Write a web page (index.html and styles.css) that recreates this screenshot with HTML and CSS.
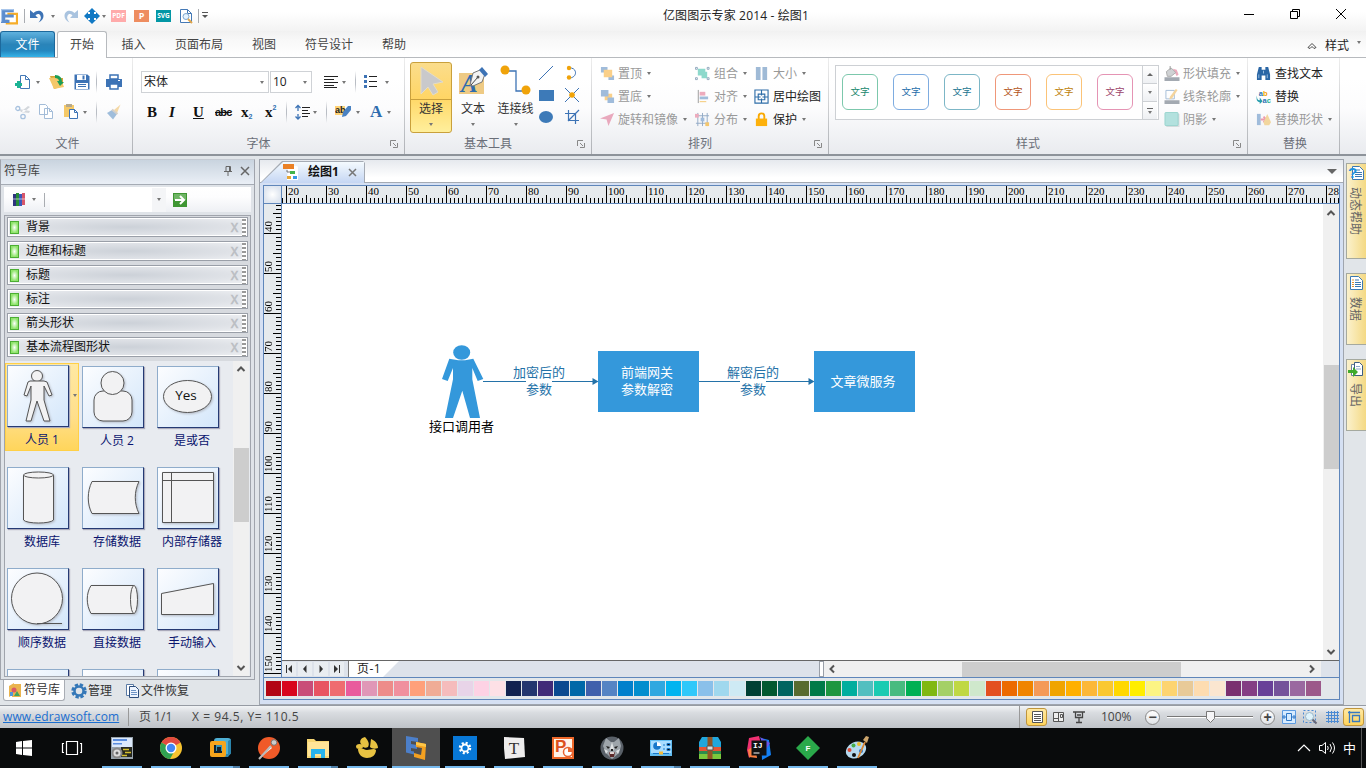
FILE: index.html
```html
<!DOCTYPE html>
<html lang="zh-CN">
<head>
<meta charset="utf-8">
<title>亿图图示专家 2014 - 绘图1</title>
<link rel="stylesheet" href="styles.css">
</head>
<body>
<div class="app">
<header class="titlebar">
  <div class="quick">
    <svg class="ic logo" viewBox="0 0 16 16"><path d="M6 5.500h9v9H5.500V11" fill="#fff" stroke="#f6ad28" stroke-width="2"/><path d="M0 1h12v3H4v2h8v3H4v2h4v3H0z" fill="#5c8dce"/><path d="M0 1h12v1H1v11H0z" fill="#a9c6eb"/></svg>
    <span class="vsep"></span>
    <svg class="ic" viewBox="0 0 16 16"><path d="M4.500 5C9 1 14.500 3 14.500 8c0 3-2 5-5 6.500 2-2.500 3-4.500 2-6.500-1-2.500-3-2.500-5-.5L9 10H1V2z" fill="#3d73b5"/></svg>
    <i class="dd"></i>
    <svg class="ic" viewBox="0 0 16 16"><path d="M11.500 5C7 1 1.500 3 1.500 8c0 3 2 5 5 6.500C4.500 12 3.500 10 4.500 8c1-2.500 3-2.500 5-.5L7 10h8V2z" fill="#a9c3df"/></svg>
    <svg class="ic" viewBox="0 0 16 16"><path d="M8 0l4 4h-2v2h2V4l4 4-4 4v-2h-2v2h2l-4 4-4-4h2v-2H4v2L0 8l4-4v2h2V4H4z" fill="#1179c4"/><path d="M6 4h4v2h2v4h-2v2H6v-2H4V6h2z" fill="#1179c4"/></svg>
    <i class="dd"></i>
    <span class="badge pdf">PDF</span><span class="badge ppt">P</span><span class="badge svgb">SVG</span>
    <svg class="ic" viewBox="0 0 16 16"><path d="M2.500 1.500h7l4 4v9h-11z" fill="#fff" stroke="#4479b6"/><path d="M9.500 1.500v4h4" fill="none" stroke="#4479b6"/><circle cx="8" cy="8.500" r="3" fill="#e5f3ff" stroke="#7ca6cf"/><path d="M10 11l4 4" stroke="#e2a64a" stroke-width="2"/></svg>
    <span class="vsep"></span>
    <svg class="tiny" viewBox="0 0 6 8"><path d="M0 .5h6" stroke="#555"/><path d="M0 3h6L3 6z" fill="#555"/></svg>
  </div>
  <div class="caption">亿图图示专家 2014 - 绘图1</div>
  <div class="winctl">
    <svg viewBox="0 0 12 12"><path d="M1 6.500h10" stroke="#000"/></svg>
    <svg viewBox="0 0 12 12"><path d="M1.500 3.500h7v7h-7zM3.500 3V1.500h7v7H9" fill="none" stroke="#000"/></svg>
    <svg viewBox="0 0 12 12"><path d="M1 1l10 10M11 1L1 11" stroke="#000"/></svg>
  </div>
</header>
<nav class="tabs">
  <a class="tab file">文件</a><a class="tab on">开始</a><a class="tab w50">插入</a><a class="tab w80">页面布局</a><a class="tab w50">视图</a><a class="tab w80">符号设计</a><a class="tab w50">帮助</a>
  <div class="tabs-end"><svg viewBox="0 0 10 8"><path d="M1 5.500l4-4 4 4-2 1-2-2-2 2z" fill="#fff" stroke="#444"/></svg><span>样式</span><i class="dd"></i></div>
</nav>
<section class="ribbon">
  <div class="group g-file">
    <div class="body two">
      <div class="row r-new">
        <svg class="ic" viewBox="0 0 16 16"><path d="M5.500 1.500h5l4 4v9h-9z" fill="#fff" stroke="#4479b6"/><path d="M10.500 1.500v4h4" fill="none" stroke="#4479b6"/><path d="M3.500 7v7M0 10.500h7" stroke="#1cb394" stroke-width="3"/></svg>
        <i class="dd"></i>
        <svg class="ic" viewBox="0 0 16 16"><path d="M1 2h5l2 2 6 0v8l-9 3z" fill="#d6a437"/><path d="M0 4l11-1 4 10-10 2z" fill="#f4c869"/><path d="M6 1c5 0 7 3 7 7h2l-4 4-3-5h2c0-2-2-3-4-3z" fill="#1b9e56"/></svg>
        <svg class="ic" viewBox="0 0 16 16"><path d="M.5.5h13l2 2v13H.5z" fill="#3d73b5"/><path d="M3 1h9v5H3zM2 9h12v6H2z" fill="#fff"/><path d="M8.500 1.500v4h2v-4z" fill="#3d73b5"/><path d="M4 10.500h8M4 12.500h8" stroke="#3d73b5"/></svg>
        <span class="vsep tall"></span>
        <svg class="ic" viewBox="0 0 16 16"><path d="M0 5h16v8H0z" fill="#3d73b5"/><path d="M4 1h8v4H4zM4 10h8v5H4z" fill="#fff" stroke="#3d73b5" stroke-width="1.500"/><path d="M12 6.500h2" stroke="#fff"/></svg>
      </div>
      <div class="row r-cut">
        <svg class="ic" viewBox="0 0 16 16"><path d="M4 5l11 2-1 2-8-1zM8 9l7-6-2-1-6 5" fill="#d3d7dc"/><circle cx="2.800" cy="4.500" r="2" fill="none" stroke="#a8c2df" stroke-width="1.300"/><circle cx="8" cy="12.500" r="2.200" fill="none" stroke="#a8c2df" stroke-width="1.300"/></svg>
        <svg class="ic" viewBox="0 0 16 16"><path d="M1.500.5h6l2 2v8h-8zM6.500 4.500h5l3 3v7h-8z" fill="#fff" stroke="#a3bcd8"/><path d="M11.500 4.500v3h3" fill="none" stroke="#a3bcd8"/></svg>
        <svg class="ic" viewBox="0 0 16 16"><path d="M1 1h10v12H1z" fill="#f5c968"/><path d="M3 0h6v3H3z" fill="#b6a98c"/><path d="M6.500 5.500h5l3 3v6h-8z" fill="#fff" stroke="#3d73b5"/><path d="M11.500 5.500v3h3" fill="none" stroke="#3d73b5"/></svg>
        <i class="dd"></i>
        <span class="vsep tall"></span>
        <svg class="ic" viewBox="0 0 16 16"><path d="M14.500.5L8 6l3 3z" fill="#f4d8a6"/><path d="M1 9l5-3 5 4-4 5.500z" fill="#9fbddb"/><path d="M6 5.500l5.500 4.500" stroke="#d4cfc8" stroke-width="2"/></svg>
      </div>
    </div>
    <div class="foot plain">文件</div>
  </div>
  <div class="group g-font">
    <div class="body two">
      <div class="row r-face">
        <div class="combo"><span>宋体</span><i class="dd"></i></div>
        <div class="combo"><span>10</span><i class="dd"></i></div>
        <svg class="ic" viewBox="0 0 16 16"><path d="M0 2.500h14M0 5.500h10M0 8.500h14M0 11.500h10M0 13.500h13" stroke="#222"/></svg>
        <i class="dd"></i><span class="vsep tall"></span>
        <svg class="ic" viewBox="0 0 16 16"><path d="M0 1h3v3H0zM0 6h3v3H0zM0 11h3v3H0z" fill="#3d73b5"/><path d="M5 2.500h8M5 7.500h8M5 12.500h8" stroke="#222"/></svg>
        <i class="dd"></i>
      </div>
      <div class="row r-bold">
        <b>B</b><b class="it">I</b><b class="un">U</b><span class="strike">abc</span><b class="x">x<small class="sub">2</small></b><b class="x">x<small class="sup">2</small></b>
        <span class="vsep tall"></span>
        <svg class="ic" viewBox="0 0 16 16"><path d="M3 2v5M3 10v5M.5 4L3 1.500 5.500 4M.5 12.500L3 15l2.500-2.500" stroke="#3d73b5" fill="none" stroke-width="1.300"/><path d="M7 3.500h8M7 6.500h6M7 9.500h8M7 12.500h6" stroke="#222"/></svg>
        <i class="dd"></i><span class="vsep tall"></span>
        <svg class="ic" viewBox="0 0 16 16"><path d="M0 2h10v9H0z" fill="#ffd273"/><text x="0" y="9" class="abtxt">ab</text><path d="M8 8l5-6h3v4l-5 6-4 1z" fill="#4a82c2"/></svg>
        <i class="dd"></i><b class="acol">A</b><i class="dd"></i>
      </div>
    </div>
    <div class="foot">字体<svg class="launch" viewBox="0 0 8 8"><path d="M.5 6V.5H6M3 3l3 3M7.500 3v4.500H3" fill="none" stroke="#888"/></svg></div>
  </div>
  <div class="group g-tool">
    <div class="body tools">
      <div class="big sel"><svg viewBox="0 0 40 36"><path d="M10 4v27l7-7 5 8 5-3-5-8 10-2z" fill="#c9c9cb" stroke="#e3dcc8"/></svg><span>选择</span><i class="dd"></i></div>
      <div class="big"><svg viewBox="0 0 40 36"><path d="M6 11h25v21H6z" fill="#eeca84"/><text x="8" y="30" class="bigA">A</text><path d="M17 23l3-12 7-3 5 4-3 8-9 4z" fill="#f3f3f3" stroke="#777"/><path d="M26 8l3-3 6 7-3 3z" fill="#3d73b5"/><path d="M18 23l7-8" stroke="#444"/><circle cx="25" cy="15" r="1.500" fill="#555"/></svg><span>文本</span><i class="dd"></i></div>
      <div class="big"><svg viewBox="0 0 40 36"><path d="M9 9h11v20h11" fill="none" stroke="#3d73b5" stroke-width="1.300"/><circle cx="9" cy="8" r="4.500" fill="#f0a30a"/><circle cx="30" cy="28" r="4.500" fill="#f0a30a"/></svg><span>连接线</span><i class="dd"></i></div>
      <div class="mini">
        <svg class="ic" viewBox="0 0 16 16"><path d="M1 15L15 1" stroke="#3d73b5"/></svg>
        <svg class="ic" viewBox="0 0 16 16"><path d="M5 3c8-1 9 9 1 10" fill="none" stroke="#3d73b5"/><circle cx="5" cy="3" r="2.200" fill="#f0a30a"/><circle cx="5" cy="12.500" r="2.200" fill="#f0a30a"/></svg>
        <svg class="ic" viewBox="0 0 16 16"><path d="M1 3h15v11H1z" fill="#3d7ab8"/></svg>
        <svg class="ic" viewBox="0 0 16 16"><path d="M1 1l14 14M15 1L1 15" stroke="#3d73b5"/><circle cx="8" cy="8" r="2.800" fill="#f0a30a"/></svg>
        <svg class="ic" viewBox="0 0 16 16"><ellipse cx="8" cy="8" rx="7" ry="6" fill="#3d7ab8"/></svg>
        <svg class="ic" viewBox="0 0 16 16"><path d="M4.500 1v10.500H15M1 4.500h10.500V15M4 12L15 1" fill="none" stroke="#3d73b5" stroke-width="1.200"/></svg>
      </div>
    </div>
    <div class="foot">基本工具<svg class="launch" viewBox="0 0 8 8"><path d="M.5 6V.5H6M3 3l3 3M7.500 3v4.500H3" fill="none" stroke="#888"/></svg></div>
  </div>
  <div class="group g-arr">
    <div class="body cols">
      <div class="col dim">
        <div class="cmd"><svg class="ic" viewBox="0 0 16 16"><path d="M1 1h7v6H1zM9 10h6v5H9z" fill="#a0bcdb"/><path d="M4 4h9v8H4z" fill="#fad08a"/></svg>置顶<i class="dd"></i></div>
        <div class="cmd"><svg class="ic" viewBox="0 0 16 16"><path d="M5 5h8v7H5z" fill="#fad08a"/><path d="M1 1h8v7H1zM8 9h7v6H8z" fill="#a0bcdb"/></svg>置底<i class="dd"></i></div>
        <div class="cmd"><svg class="ic" viewBox="0 0 16 16"><path d="M0 7l15-6-6 14-2-7z" fill="#e9a9bd"/></svg>旋转和镜像<i class="dd"></i></div>
      </div>
      <div class="col dim">
        <div class="cmd"><svg class="ic" viewBox="0 0 16 16"><path d="M3 3h8v7H3zM7 6h6v7H7z" fill="#8dd9cc"/><path d="M.5 1.500h2v2h-2zM13 1.500h2v2h-2zM.5 12.500h2v2h-2zM13 12.500h2v2h-2z" fill="#fff" stroke="#8fa6bd"/></svg>组合<i class="dd"></i></div>
        <div class="cmd"><svg class="ic" viewBox="0 0 16 16"><path d="M3.500 1v14" stroke="#999"/><path d="M5 3h6v4H5z" fill="#edabbd"/><path d="M5 8h9v3H5z" fill="#a0bcdb"/><path d="M5 13.500h7" stroke="#f3c66e"/></svg>对齐<i class="dd"></i></div>
        <div class="cmd"><svg class="ic" viewBox="0 0 16 16"><path d="M3 1v14M8 1v14M13 1v14M1 4h14M1 12h14" stroke="#91aac5"/><path d="M0 2h4v4H0z" fill="#edabbd"/><path d="M6 6h4v4H6z" fill="#a0bcdb"/><path d="M11 11h4v4h-4z" fill="#f3c66e"/></svg>分布<i class="dd"></i></div>
      </div>
      <div class="col">
        <div class="cmd dim"><svg class="ic" viewBox="0 0 16 16"><path d="M2 1h5v14H2zM9 1h5v14H9z" fill="#9fbad6"/></svg>大小<i class="dd"></i></div>
        <div class="cmd"><svg class="ic" viewBox="0 0 16 16"><path d="M1 1h14v14H1zM4.500 5.500h7v6h-7zM8 1v6M8 10v5M1 8.500h6M9 8.500h6" fill="none" stroke="#2e6da8" stroke-width="1.200"/></svg>居中绘图</div>
        <div class="cmd"><svg class="ic" viewBox="0 0 16 16"><path d="M5 8V4.500a3 3 0 016 0V8" fill="none" stroke="#f9a800" stroke-width="2"/><path d="M2 7h12v8H2z" fill="#fdb10c"/></svg>保护<i class="dd"></i></div>
      </div>
    </div>
    <div class="foot">排列<svg class="launch" viewBox="0 0 8 8"><path d="M.5 6V.5H6M3 3l3 3M7.500 3v4.500H3" fill="none" stroke="#888"/></svg></div>
  </div>
  <div class="group g-style">
    <div class="body styl">
      <div class="gallery">
        <span class="sw s1">文字</span><span class="sw s2">文字</span><span class="sw s3">文字</span><span class="sw s4">文字</span><span class="sw s5">文字</span><span class="sw s6">文字</span>
        <div class="spin"><span><i class="du"></i></span><span><i class="dd"></i></span><span class="more"><i class="dd"></i></span></div>
      </div>
      <div class="col dim">
        <div class="cmd"><svg class="ic" viewBox="0 0 16 16"><path d="M9 3l4 1 2 5-2 2z" fill="#edabbd"/><path d="M2 6l5-4 5 5-5 4H3z" fill="#d0d2d4" stroke="#aaa"/><path d="M6 4V0" stroke="#999"/><path d="M0 12h16v4H0z" fill="#a3a9b1"/></svg>形状填充<i class="dd"></i></div>
        <div class="cmd"><svg class="ic" viewBox="0 0 16 16"><path d="M1.500 1.500h9v9h-9z" fill="none" stroke="#a3bcd8"/><path d="M12 0l2 1-6 9-3 1 1-3z" fill="#f4d49c"/><path d="M0 12h16v4H0z" fill="#a3a9b1"/></svg>线条轮廓<i class="dd"></i></div>
        <div class="cmd"><svg class="ic" viewBox="0 0 16 16"><path d="M2 2h14v14H2z" fill="#dadcdf"/><rect x=".5" y=".5" width="14" height="14" rx="1" fill="#b3e1de" stroke="#96d3cd"/></svg>阴影<i class="dd"></i></div>
      </div>
    </div>
    <div class="foot">样式<svg class="launch" viewBox="0 0 8 8"><path d="M.5 6V.5H6M3 3l3 3M7.500 3v4.500H3" fill="none" stroke="#888"/></svg></div>
  </div>
  <div class="group g-rep">
    <div class="body cols">
      <div class="col">
        <div class="cmd"><svg class="ic" viewBox="0 0 16 16"><path d="M3 1h3v3h4V1h3l2 8v6h-5v-5H6v5H1V9z" fill="#2a66a5"/><path d="M3 9v4M12 9v4M8 5v3" stroke="#9bbfe2"/></svg>查找文本</div>
        <div class="cmd"><svg class="ic" viewBox="0 0 16 16"><text x="3" y="7" class="abtxt2">a<tspan fill="#f2a200">b</tspan></text><text x="7" y="15" class="abtxt2">a<tspan fill="#1cab93">c</tspan></text><path d="M1 7c0 4 1 5 3 5V9l3 4-3 3v-2c-3 0-4-3-3-7" fill="#239cad"/></svg>替换</div>
        <div class="cmd dim"><svg class="ic" viewBox="0 0 16 16"><path d="M1 2h4v12H1z" fill="#a0bcdb"/><path d="M5 8h5M8 5l3 3-3 3" stroke="#ed9aac" fill="none" stroke-width="2"/><path d="M12 2l4 9-2 3h-5l-1-3z" fill="#f2d69e"/></svg>替换形状<i class="dd"></i></div>
      </div>
    </div>
    <div class="foot plain">替换</div>
  </div>
</section>
<main class="work">
  <aside class="side">
    <div class="panel">
      <div class="phead"><span>符号库</span><svg viewBox="0 0 10 12"><path d="M3 1.500h4.500v5H3zM1 6.500h8M5 7v4M6.500 2v4" fill="none" stroke="#666"/></svg><svg viewBox="0 0 10 12"><path d="M1 2l8 8M9 2l-8 8" stroke="#666" stroke-width="1.500"/></svg></div>
      <div class="ptool">
        <svg class="ic" viewBox="0 0 16 16"><path d="M2 2h3v12H2z" fill="#2e337e"/><path d="M5 1h3v13H5z" fill="#278a38"/><path d="M8 2h3v12H8z" fill="#3a58ba"/><path d="M11 1h3v12h-3z" fill="#d7566b"/><path d="M2 7h12" stroke="#fff" stroke-opacity=".3" stroke-width="2"/></svg>
        <i class="dd"></i><span class="vsep"></span>
        <div class="search"><span><i class="dd"></i></span></div>
        <svg class="go" viewBox="0 0 14 14"><path d="M0 0h14v14H0z" fill="#3f9633"/><path d="M1 1h12v6H1z" fill="#6fb565"/><path d="M2 7h8M7 3l4 4-4 4" fill="none" stroke="#fff" stroke-width="2"/></svg>
      </div>
      <div class="plist">
        <div class="libs">
          <div class="lib"><i class="book"></i><span>背景</span><em>X</em><u></u></div>
          <div class="lib"><i class="book"></i><span>边框和标题</span><em>X</em><u></u></div>
          <div class="lib"><i class="book"></i><span>标题</span><em>X</em><u></u></div>
          <div class="lib"><i class="book"></i><span>标注</span><em>X</em><u></u></div>
          <div class="lib"><i class="book"></i><span>箭头形状</span><em>X</em><u></u></div>
          <div class="lib"><i class="book"></i><span>基本流程图形状</span><em>X</em><u></u></div>
        </div>
        <div class="shapewrap">
          <div class="shapes">
            <div class="shape picked"><svg viewBox="0 0 60 60"><g class="ln"><circle cx="29" cy="10" r="5.500"/><path d="M22 15h14l3 1 5 13-3 1-5-10v14l6 21h-6l-7-20-6 20h-5l5-21V20l-4 10-3-1 4-13z"/></g></svg><span>人员 1</span><i class="dd"></i></div>
            <div class="shape"><svg viewBox="0 0 60 60"><g class="ln"><rect x="11" y="24" width="38" height="30" rx="9"/><circle cx="29.500" cy="16" r="11.500"/></g></svg><span>人员 2</span></div>
            <div class="shape"><svg viewBox="0 0 60 60"><g class="ln"><ellipse cx="29.500" cy="29.500" rx="24" ry="16"/></g><text x="28" y="33" class="yes">Yes</text></svg><span>是或否</span></div>
            <div class="shape"><svg viewBox="0 0 60 60"><g class="ln"><path d="M15.500 7v45c3 4 27 4 30 0V7"/><ellipse cx="30.500" cy="7" rx="15" ry="3"/></g></svg><span>数据库</span></div>
            <div class="shape"><svg viewBox="0 0 60 60"><g class="ln"><path d="M9 13.500h47c-5 10-5 22 0 32H9c-5-9-5-22 0-32z"/></g></svg><span>存储数据</span></div>
            <div class="shape"><svg viewBox="0 0 60 60"><g class="ln"><path d="M4.500 4.500h51v50h-51zM13.500 4.500v50M4.500 12.500h51"/></g></svg><span>内部存储器</span></div>
            <div class="shape"><svg viewBox="0 0 60 60"><g class="ln"><circle cx="29" cy="29.500" r="25.500"/><path d="M29 54.500h25"/></g></svg><span>顺序数据</span></div>
            <div class="shape"><svg viewBox="0 0 60 60"><g class="ln"><path d="M8 16.500h43c4 7 4 20 0 28H8c-5-9-5-20 0-28z"/><ellipse cx="51" cy="30.500" rx="3.500" ry="14"/></g></svg><span>直接数据</span></div>
            <div class="shape"><svg viewBox="0 0 60 60"><g class="ln"><path d="M3.500 24.500l52-10v31h-52z"/></g></svg><span>手动输入</span></div>
            <div class="shape"><svg viewBox="0 0 60 60"></svg></div><div class="shape"><svg viewBox="0 0 60 60"></svg></div><div class="shape"><svg viewBox="0 0 60 60"></svg></div>
          </div>
          <div class="vbar vb-side"><svg viewBox="0 0 10 8"><path d="M1.500 6L5 2.500 8.500 6" class="chev"/></svg><b></b><svg viewBox="0 0 10 8"><path d="M1.500 2L5 5.500 8.500 2" class="chev"/></svg></div>
        </div>
      </div>
    </div>
    <div class="stabs">
      <div class="stab on"><svg class="ic" viewBox="0 0 16 16"><path d="M2 4l5-3v11l-5 3zM7 2h7v13H5z" fill="#eab44e"/><circle cx="7" cy="8" r="2.500" fill="#d95968"/><path d="M7 14l3-5 3 5z" fill="#43a35e"/><path d="M3 10h3v4H3z" fill="#5196d8"/></svg>符号库</div>
      <div class="stab"><svg class="ic" viewBox="0 0 16 16"><circle cx="8" cy="8" r="6.200" fill="none" stroke="#3578b8" stroke-width="3" stroke-dasharray="3.200 1.670"/><circle cx="8" cy="8" r="4.500" fill="none" stroke="#3578b8" stroke-width="2.500"/></svg>管理</div>
      <div class="stab"><svg class="ic" viewBox="0 0 16 16"><path d="M2.500 1.500h7v11h-7z" fill="#fff" stroke="#5a7aa5"/><path d="M5.500 3.500h6l3 3v8h-9z" fill="#edf4ff" stroke="#2c4d7c"/><path d="M7 7.500h5M7 9.500h6M7 11.500h6" stroke="#6d93c5"/></svg>文件恢复</div>
    </div>
  </aside>
  <section class="editor">
    <div class="dtabs">
      <div class="dtab"><svg class="ic" viewBox="0 0 16 16"><path d="M5 2h9l1 1v13H4z" fill="#fff"/><path d="M0 0h11v5H0z" fill="#ea8126"/><path d="M7 7h5v3H7z" fill="#43b34a"/><path d="M4 12h4v3H4z" fill="#e8a634"/><path d="M10 12h4v3h-4z" fill="#3999e5"/><path d="M4 6v2h3" fill="none" stroke="#777"/></svg><span>绘图1</span><svg class="dx" viewBox="0 0 9 9"><path d="M1 1l7 7M8 1L1 8" stroke="#777" stroke-width="1.500"/></svg></div>
      <i class="dlist"></i>
    </div>
    <div class="doc">
      <div class="hr"><span class="corner"></span><div class="hruler" id="hruler"></div></div>
      <div class="mid">
        <div class="vruler" id="vruler"></div>
        <div class="sheet">
          <div class="view-row">
            <div class="canvas">
              <svg class="wires" viewBox="282 204 1041 456">
                <g fill="#3498db"><ellipse cx="461.700" cy="352.500" rx="8.500" ry="7.300"/><path d="M449.300 358.700l9 1.600h6.700l8.300-1.600 10 20.300-5.600 2-5.400-13v11.300l7.700 38.700h-10l-7.700-27.300-9.300 27.300h-8l8-38.700V368l-5.300 13-5.700-2z"/></g>
                <path d="M483 381.500h43M552 381.500h43M699 381.500h41M766 381.500h45" stroke="#2472a8"/>
                <path d="M592.500 378l6 3.500-6 3.500zM808.500 378l6 3.500-6 3.500z" fill="#2472a8"/>
              </svg>
              <span class="node n1">前端网关<br>参数解密</span>
              <span class="node n2">文章微服务</span>
              <span class="lbl l1">加密后的<br>参数</span>
              <span class="lbl l2">解密后的<br>参数</span>
              <span class="lbl l3">接口调用者</span>
            </div>
            <div class="vbar vb-doc"><svg viewBox="0 0 10 8"><path d="M1.500 6L5 2.500 8.500 6" class="chev"/></svg><b></b><svg viewBox="0 0 10 8"><path d="M1.500 2L5 5.500 8.500 2" class="chev"/></svg></div>
          </div>
          <div class="pages">
            <div class="pnav"><svg viewBox="0 0 8 8"><path d="M7 0v8L3 4z" fill="#333"/><path d="M1.500 0v8" stroke="#333"/></svg><svg viewBox="0 0 8 8"><path d="M5.500 0v8L2 4z" fill="#333"/></svg><svg viewBox="0 0 8 8"><path d="M2.500 0v8L6 4z" fill="#333"/></svg><svg viewBox="0 0 8 8"><path d="M1 0v8l4-4z" fill="#333"/><path d="M6.500 0v8" stroke="#333"/></svg></div>
            <div class="ptab">页-1</div>
            <div class="pfill"></div>
            <i class="split"></i>
            <div class="hbar"><svg viewBox="0 0 8 10"><path d="M6 1.500L2.500 5 6 8.500" class="chev"/></svg><b></b><svg viewBox="0 0 8 10"><path d="M2 1.500L5.500 5 2 8.500" class="chev"/></svg></div>
          </div>
        </div>
      </div>
      <div class="palette" id="palette"></div>
    </div>
  </section>
  <aside class="dock">
    <div class="dk d1"><svg class="ic" viewBox="0 0 16 16"><path d="M4.500 1.500h7l4 4v9h-11z" fill="#fff" stroke="#3c79b2"/><path d="M7 5h5M7 7.500h7M7 9.500h7M7 11.500h7" stroke="#3c79b2"/><text x="0" y="13" class="q">?</text></svg><span>动态帮助</span></div>
    <div class="dk"><svg class="ic" viewBox="0 0 16 16"><path d="M2.500 1.500h8l4 4v9h-12z" fill="#fff" stroke="#3c79b2"/><path d="M7 5h4M7 7.500h6M7 9.500h6M7 11.500h6" stroke="#3c79b2"/><path d="M4 5h2M4 7.500h2M4 9.500h2M4 11.500h2" stroke="#e89225"/></svg><span>数据</span></div>
    <div class="dk"><svg class="ic" viewBox="0 0 16 16"><path d="M3.500 3.500h8v11h-8z" fill="#fff" stroke="#69819e"/><path d="M6.500 1.500h5l3 3v10h-8z" fill="#fff" stroke="#3d5e84"/><path d="M8 5.500h4M8 8h5" stroke="#8da9ca"/><path d="M0 9h5V6l5 5-5 5v-4H0z" fill="#3faa2d"/></svg><span>导出</span></div>
  </aside>
</main>
<footer class="status">
  <a class="site">www.edrawsoft.com</a><span class="pg">页 1/1</span><span class="xy">X = 94.5, Y= 110.5</span>
  <div class="view">
    <span class="vbtn"><svg class="ic" viewBox="0 0 16 16"><path d="M3.500 2.500h10v11h-10zM5 5.500h7M5 7.500h7M5 9.500h7M5 11.500h7" fill="#fff" stroke="#555"/></svg></span>
    <svg class="ic" viewBox="0 0 16 16"><path d="M3.500 3.500h10v9h-10zM8.500 3.500v9M10.500 5.500h2v3h-2zM4 9.500h4" fill="#eee" stroke="#555"/></svg>
    <svg class="ic" viewBox="0 0 16 16"><path d="M2 3h12M4.500 3v5.500h7V3M8 9v4M5 13.500h6M6 6h4" fill="none" stroke="#444" stroke-width="1.300"/></svg>
    <span class="pct">100%</span>
    <i class="knob">−</i>
    <svg class="slider" viewBox="0 0 86 16"><path d="M0 7.500h86" stroke="#777"/><path d="M0 8.500h86" stroke="#fff"/><path d="M39.500 2.500h8v7l-4 4-4-4z" fill="#f6f6f8" stroke="#777"/></svg>
    <i class="knob">+</i>
    <svg class="ic" viewBox="0 0 16 16"><path d="M1 1h14v14H1z" fill="#d6ebff"/><path d="M1.500 1.500h13v13h-13z" fill="none" stroke="#5d9be0"/><path d="M5.500 4.500h5v7h-5zM1 8h4M11 8h4M3 6v4M13 6v4" fill="none" stroke="#2e77c6"/></svg>
    <svg class="ic" viewBox="0 0 16 16"><path d="M1.500 1.500h12v12h-12z" fill="none" stroke="#4b8ad3" stroke-dasharray="2 2"/><circle cx="7.500" cy="7.500" r="4" fill="#dff3fb" stroke="#9ab9cc"/><path d="M10.500 10.500l4 4" stroke="#667" stroke-width="2"/></svg>
    <svg class="ic" viewBox="0 0 16 16"><path d="M4.500 2v12M7.500 2v12M10.500 2v12M13.500 2v12M2 3.500h13M2 6.500h13M2 9.500h13M2 12.500h13" stroke="#4b8ad3"/></svg>
    <span class="vbtn"><svg class="ic" viewBox="0 0 16 16"><path d="M3.500 2v12M2 3.500h12M6.500 6.500h7v6h-7z" fill="none" stroke="#3779c0" stroke-width="1.300"/></svg></span>
  </div>
</footer>
<footer class="taskbar">
  <span class="tb sys"><svg viewBox="0 0 24 24"><path d="M4 6l6-1v6.500H4zM11 4.900L20 4v7.500h-9zM4 12.500h6V19l-6-1zM11 12.500h9V20l-9-1.100z" fill="#fff"/></svg></span>
  <span class="tb sys"><svg viewBox="0 0 24 24"><path d="M6.500 5.500h11v13h-11zM4 7.500H2.500v9H4M20 7.500h1.500v9H20" fill="none" stroke="#fff" stroke-width="1.200"/></svg></span>
  <span class="tb"><svg viewBox="0 0 24 24"><path d="M1 1h22v22H1z" fill="#97a3ac"/><path d="M2 2h20v9H2z" fill="#dce9fb"/><path d="M3 3h14v2H3zM3 7h9v1.500H3z" fill="#5b8ddd"/><path d="M11 11h11v10H11z" fill="#25271f"/><path d="M13 13.500h6M15 16.500h6M12 19.500h5" stroke="#d5c02e" stroke-width="1.500"/><circle cx="7" cy="17" r="4.500" fill="#dedede" stroke="#888" stroke-width="2"/><circle cx="7" cy="17" r="1.500" fill="#666"/></svg></span>
  <span class="tb"><svg viewBox="0 0 24 24"><circle cx="12" cy="12" r="11" fill="#f6c32f"/><path d="M12 12L2.500 6.500a11 11 0 0119 0z" fill="#e24a3f"/><path d="M12 12L2.500 6.500A11 11 0 0011 23l5-9z" fill="#30a151"/><circle cx="12" cy="12" r="5.500" fill="#fff"/><circle cx="12" cy="12" r="4.200" fill="#4387f4"/></svg></span>
  <span class="tb multi"><svg viewBox="0 0 24 24"><rect x="6" y="2" width="17" height="17" rx="3" fill="#4fb0d5"/><path d="M20 5l3-2v14l-3 4H6l2-3h12z" fill="#2b85ad"/><rect x="2" y="5" width="16" height="16" rx="2" fill="#f6a51c"/><path d="M6 9h8v8H6z" fill="#10222e"/><path d="M8 9h6v6H8z" fill="#3594b8"/><path d="M9 11h4v4H9z" fill="#10222e"/></svg></span>
  <span class="tb"><svg viewBox="0 0 24 24"><circle cx="12" cy="12" r="11" fill="#f05a28"/><path d="M5 20l8-10 2 2z" fill="#fff"/><path d="M2 23l12-13" stroke="#bbb" stroke-width="2"/><circle cx="17" cy="6.500" r="2.800" fill="#ccc" stroke="#777"/></svg></span>
  <span class="tb multi"><svg viewBox="0 0 24 24"><path d="M1 3h7l2 2h13v17H1z" fill="#f7d774"/><path d="M2 6h21v14H2z" fill="#ffe598"/><path d="M5 22v-9h14v9h-4v-4H9v4z" fill="#28b4ec"/></svg></span>
  <span class="tb"><svg viewBox="0 0 24 24"><path d="M3 13c3-2 6 1 9 1s7-2 9 0c0 5-4 8-9 8s-9-4-9-9z" fill="#e7c242"/><ellipse cx="4.500" cy="10.500" rx="3.500" ry="2.500" fill="#e7c242"/><path d="M6 8c-2-3 0-6 4-7 3 3 5 7 3 10-3 2-6 0-7-3zM16 3c3 1 7 4 7 9-3 1-6 1-8-1z" fill="#e7c242"/></svg></span>
  <span class="tb active"><svg viewBox="0 0 24 24"><path d="M2 0l12 2v4L7 5v3l6 1v4l-6-1v3l3 .500v3l-8-2z" fill="#4c7fc9"/><path d="M12 6l10 2-1 16-11-3v-4l7 2 1-7-6-1z" fill="#f3a020"/><path d="M12 6l10 2v3l-10-2z" fill="#ffc747"/></svg></span>
  <span class="tb"><svg viewBox="0 0 24 24"><path d="M0 0h24v24H0z" fill="#0878d7"/><circle cx="12" cy="12" r="5" fill="none" stroke="#fff" stroke-width="2.500" stroke-dasharray="2 1.930"/><circle cx="12" cy="12" r="3.500" fill="none" stroke="#fff" stroke-width="1.800"/></svg></span>
  <span class="tb"><svg viewBox="0 0 24 24"><path d="M2 1l20 1 1 19-20 2L2 12z" fill="#eeeded"/><text x="12" y="17.500" class="ty">T</text></svg></span>
  <span class="tb"><svg viewBox="0 0 24 24"><path d="M2 2h20v20H2z" fill="#fff3e9" stroke="#ee682a" stroke-width="2"/><text x="4" y="16" class="pp">P</text><circle cx="17" cy="16" r="4.500" fill="#fff" stroke="#e96532" stroke-width="1.500"/><path d="M17 16v-4.500a4.500 4.500 0 014.500 4.500z" fill="#e96532"/></svg></span>
  <span class="tb"><svg viewBox="0 0 24 24"><circle cx="12" cy="12" r="11.500" fill="#596068"/><path d="M3 10l3-8 5 4h3l5-4 2 8-2 7-7 6-6-6z" fill="#9ea5ab"/><path d="M12 6l2 7-2 2-2-2zM4 13l4 2-2 3zM20 13l-4 2 2 3z" fill="#dfe2e4"/><path d="M6 10l4 1-2 2zM18 10l-4 1 2 2zM11 13h2v2h-2z" fill="#222"/><path d="M9 16h6l-1 5h-4z" fill="#5c2929"/><path d="M10 16l1 2 1-2 1 2 1-2" stroke="#fff" fill="none"/></svg></span>
  <span class="tb multi"><svg viewBox="0 0 24 24"><path d="M1 4h22v16H1z" fill="#62bdf1"/><path d="M2 5h20v12H2z" fill="#a8ddff"/><circle cx="8" cy="10" r="3.800" fill="#1878cb"/><path d="M8 10V6a4 4 0 014 4z" fill="#fff"/><path d="M14 9h2M14 13h2M18 7.500h3v2h-3zM18 12.500h3v2h-3z" stroke="#1878cb"/><path d="M4 17.500h16" stroke="#1878cb"/><path d="M10 15.500h4v3h-4z" fill="#f5bd3c"/></svg></span>
  <span class="tb"><svg viewBox="0 0 24 24"><path d="M4 1h16l3 5v6H1V6z" fill="#20a6dc"/><path d="M1 11h22v4H1z" fill="#e45535"/><path d="M1 15h22v3H1z" fill="#2c8c4c"/><path d="M1 18h22v5H1z" fill="#7bc83c"/><path d="M9.500 1h5v22h-5z" fill="#925525"/><path d="M9 10h6v4H9z" fill="#ddd" stroke="#555"/></svg></span>
  <span class="tb"><svg viewBox="0 0 24 24"><path d="M2 2l10-2 3 12L2 22 0 14z" fill="#f13172"/><path d="M14 2l8 2 2 15-9 5z" fill="#147ff2"/><path d="M1 14l7-5 2 13-8-1z" fill="#fb8042"/><path d="M13 1l10 6-5 8z" fill="#6d54e8"/><path d="M4.500 4.500h15v15h-15z" fill="#111"/><text x="6" y="12" class="ij">IJ</text><path d="M6.500 17h6" stroke="#fff"/></svg></span>
  <span class="tb"><svg viewBox="0 0 24 24"><path d="M12 0l12 12-12 12L0 12z" fill="#2aa94a"/><text x="12" y="15" class="ff">F</text></svg></span>
  <span class="tb"><svg viewBox="0 0 24 24"><ellipse cx="11" cy="14" rx="10.500" ry="8" transform="rotate(-25 11 14)" fill="#b5d9ef"/><circle cx="4.500" cy="14" r="2" fill="#d84b36"/><circle cx="8.500" cy="9.500" r="2" fill="#44ad4a"/><circle cx="14" cy="8" r="2" fill="#eab92b"/><circle cx="16" cy="15" r="2" fill="#2873c8"/><circle cx="9" cy="19" r="2" fill="#111"/><path d="M13 22L20 6" stroke="#d88430" stroke-width="1.800"/><path d="M18 4l3-4 3 1-2 6z" fill="#cda66d"/></svg></span>
  <div class="tray"><svg viewBox="0 0 14 14"><path d="M1 10l6-6 6 6" fill="none" stroke="#fff" stroke-width="1.200"/></svg><svg class="vol" viewBox="0 0 18 14"><path d="M1.500 4.500H4l3.500-3v11L4 9.500H1.500z" fill="none" stroke="#fff"/><path d="M9.500 5q1.500 2 0 4M12 3q3 4 0 8M14.500 1.500q4 5.500 0 11" fill="none" stroke="#fff"/></svg><span>中</span></div>
</footer>
</div>
<script src="script.js"></script>
</body>
</html>
```
FILE: styles.css
```css
*{box-sizing:border-box}
body{margin:0;background:#dfe3e8;font:12px/16px "Open Sans","Noto Sans CJK SC",sans-serif;color:#333;overflow:hidden}
svg{flex:none;display:block}
i,em{font-style:normal}
.app{width:1366px;height:768px;display:flex;flex-direction:column}
.ic{width:16px;height:16px}
.dd{display:block;flex:none;width:0;height:0;border:2.500px solid transparent;border-width:3px 2.500px 0;border-top-color:#777}
.du{display:block;width:0;height:0;border:3px solid transparent;border-bottom:3px solid #666;border-top:0}
.vsep{width:1px;height:14px;background:#a9acb1}
.vsep.tall{height:22px;background:linear-gradient(transparent,#b9bdc4 40%,#b9bdc4 60%,transparent)}

.titlebar{height:31px;display:grid;grid-template-columns:230px 1fr 134px;background:linear-gradient(#fff 12px,#f3f3f3 31px)}
.quick{display:grid;grid-template-columns:23px 5px 22px 12px 21px 18px 9px 23px 22px 22px 20px 4px 6px;padding:1px 0 0 1px;align-items:center}
.quick .logo{width:17px;height:17px}
.badge{width:15px;height:12px;font:bold 6.500px/12px "Open Sans",sans-serif;color:#fff;text-align:center}
.pdf{background:#ffabab}.ppt{background:#ee8d60;font-size:9px}.svgb{background:#0397a5}
.tiny{width:6px;height:8px}
.caption{text-align:center;padding:8px 0 0;margin-left:10px;color:#222;letter-spacing:.15px}
.winctl{display:flex;gap:34px;padding:8px 0 0 11px}
.winctl svg{width:12px;height:12px}

.tabs{height:27px;display:flex;border-bottom:1px solid #b7babe;background:linear-gradient(#f1f1f1,#f8f8f8 9px,#fff)}
.tab{height:27px;line-height:28px;text-align:center;color:#444}
.tab.file{width:55px;height:26px;color:#fff;border:1px solid #1d699c;border-bottom:0;border-radius:3px 3px 0 0;background:linear-gradient(#5fb1de,#2a84b9 50%,#2487bf 75%,#35b3e8);line-height:25px}
.tab.on{width:50px;margin-left:2px;background:#fff;border:1px solid #b7babe;border-bottom:0;border-radius:3px 3px 0 0;line-height:26px}
.w50{width:53px}.w80{width:78px}
.w80+.w50{width:52px}
.tabs-end{margin-left:auto;display:flex;align-items:center;gap:8px;padding:3px 5px 0 0;color:#222}
.tabs-end svg{width:10px;height:8px}
.tabs-end .dd{margin:0 0 6px 0}

.ribbon{height:98px;display:flex;border-bottom:2px solid #8d939a;background:linear-gradient(#fff 20px,#fcfcfd 50px,#e9ebef)}
.group{display:flex;flex-direction:column;border-right:1px solid;border-image:linear-gradient(#eee,#aeb1b6) 1}
.g-file{width:133px}.g-font{width:272px}.g-tool{width:187px}.g-arr{width:237px}.g-style{width:419px}.g-rep{width:92px}
.body{height:77px}
.foot{height:17px;display:grid;grid-template-columns:1fr 20px;justify-items:center;align-items:center;color:#6a6e78}
.foot.plain{grid-template-columns:1fr;padding-left:3px}
.launch{width:8px;height:8px}
.row{display:grid;align-items:center;height:30px}
.two{padding-top:9px}
.r-new{grid-template-columns:21px 13px 25px 22px 10px 16px;padding-left:15px}
.r-cut{grid-template-columns:23px 25px 20px 13px 10px 16px;padding-left:15px}
.r-face{grid-template-columns:129px 54px 18px 13px 9px 21px 6px;padding-left:8px}
.combo{height:22px;border:1px solid #cfd2d6;background:#fff;display:flex;align-items:center;justify-content:space-between;padding:0 4px 0 2px;color:#222}
.combo:nth-child(1){width:128px}.combo:nth-child(2){width:42px}
.r-bold{grid-template-columns:22px 24px 22px 26px 24px 21px 9px 18px 13px 9px 21px 14px 17px 6px;padding-left:14px;color:#111}
.r-bold b{font:bold 15px/18px "Liberation Serif",serif}
.r-bold .it{font-style:italic}.r-bold .un{text-decoration:underline}
.strike{font:bold 11px/16px "Liberation Sans",sans-serif;letter-spacing:-.8px;text-decoration:line-through}
.x small{font:bold 7px/7px "Liberation Sans",sans-serif;color:#3070b0}
.sub{vertical-align:-2px}.sup{vertical-align:7px}
.r-bold .acol{font-size:17px;color:#2e6cae}
.abtxt{font:bold 9px "Liberation Sans",sans-serif;fill:#222}
.abtxt2{font:bold 8px "Liberation Sans",sans-serif;fill:#2b73b5}
.bigA{font:italic bold 25px "Liberation Serif",serif;fill:#2e6cae}
.tools{display:grid;grid-template-columns:42px 42px 43px 1fr;padding:4px 0 0 5px}
.big{height:71px;display:flex;flex-direction:column;align-items:center;color:#333}
.big svg{width:40px;height:36px}
.big span{line-height:16px;margin-top:3px;white-space:nowrap}
.big .dd{margin-top:6px}
.sel{border:1px solid #c9a03c;border-radius:3px;background:linear-gradient(#fbdd8c,#ffd564 36px,#c9a03c 36px,#c9a03c 37px,#ffd96a 37px,#ffef9c)}
.sel span{margin-top:2px}
.mini{display:grid;grid-template-columns:26px 16px;grid-auto-rows:22px;padding-left:1px;align-items:center}
.cols,.styl{display:flex;padding-top:4px}
.cmd{height:23px;display:flex;align-items:center;white-space:nowrap;color:#222}
.cmd .ic{width:15px;height:15px;margin-right:3px}
.cmd .dd{margin-left:5px}
.dim,.cmd.dim{color:#999}
.dim .cmd{color:#999}
.g-arr .col:nth-child(1){width:103px;padding-left:8px}
.g-arr .col:nth-child(2){width:59px}
.g-arr .col:nth-child(2) .ic{margin-right:4px}
.g-arr .col:nth-child(3) .cmd .ic{margin-right:4px}
.g-rep .col{padding-left:8px}
.g-rep .cmd .ic{margin-right:4px}
.styl{padding-left:6px}
.gallery{width:324px;height:55px;margin-top:3px;border:1px solid #cdd0d4;background:#fff;display:flex;gap:15px;padding-left:6px;align-items:flex-start}
.sw{width:36px;height:36px;margin-top:8px;border:1px solid;border-radius:6px;font:9.500px/33px "Noto Sans CJK SC",sans-serif;text-align:center;flex:none}
.s1{border-color:#7cc8ac;color:#16876c}.s2{border-color:#7eace0;color:#236ca9}.s3{border-color:#7cb6c6;color:#217590}.s4{border-color:#ef9779;color:#b3541a}.s5{border-color:#fbc377;color:#bd810a}.s6{border-color:#e594b4;color:#9d456b}
.spin{margin-left:-6px;width:15px;height:53px;display:flex;flex-direction:column;flex:none}
.spin span{flex:1;display:flex;flex-direction:column;align-items:center;justify-content:center;border-left:1px solid #cdd0d4;border-bottom:1px solid #cdd0d4;background:linear-gradient(#fff,#eef0f3)}
.spin .more{border-bottom:0}
.more::before{content:"";width:6px;height:1px;background:#666;margin-bottom:2px}
.g-style .col{padding-left:5px}
.g-style .cmd .ic{width:16px}

.work{height:549px;display:flex;background:#e1e5e9;padding-top:3px}
.side{width:255px;display:flex;flex-direction:column}
.panel{height:521px;border:1px solid #a0a4ac;border-top-color:#c5cad2;background:#dfe3e8;display:flex;flex-direction:column}
.phead{height:25px;display:flex;align-items:center;padding:0 4px 2px 3px;border-bottom:1px solid #a5abb4;background:linear-gradient(#c9d4df,#eaeff6);color:#444;flex:none}
.phead span{margin-right:auto}
.phead svg{width:10px;height:12px;margin-left:7px}
.ptool{height:25px;margin:2px 3px 3px;background:linear-gradient(#fff,#fdfdfe 40%,#eef0f4);display:grid;grid-template-columns:21px 12px 6px 123px 14px;padding-left:7px;align-items:center;flex:none}
.search{width:116px;height:24px;background:#fff;display:flex;justify-content:flex-end}
.search span{width:14px;background:#f4f5f7;display:flex;align-items:center;justify-content:center}
.go{width:14px;height:14px}
.plist{flex:1;min-height:0;margin:0 3px 2px;border:1px solid #a0a4ac;display:flex;flex-direction:column;background:#d7dadf}
.libs{padding:1px 2px 4px;display:grid;gap:4px}
.lib{height:20px;border:1px solid #9a9fa8;box-shadow:inset 0 0 0 1px #fff;background:radial-gradient(ellipse at center,#ccd1d8,#dfe2e7 60%,#eef0f3);display:flex;align-items:center;padding:0 1px 0 2px;color:#111}
.book{width:9px;height:13px;margin-right:7px;background:radial-gradient(#fff,#8ee46a 70%);border:1px solid #4cae33}
.lib em{margin-left:auto;color:#bcbfc4;font:12px "Open Sans",sans-serif;margin-right:4px;-webkit-text-stroke:.7px #bcbfc4}
.lib u{width:4px;height:17px;background:radial-gradient(circle at 1px 1px,#999 0 1px,#fff 1.200px) 0 0/2px 4px}
.shapewrap{flex:1;display:flex;min-height:0;background:#e8ebf0}
.shapes{width:228px;flex:none;display:grid;grid-template-columns:75px 75px 75px;grid-auto-rows:101px;overflow:hidden;padding-top:2px}
.shape{height:88px;width:74px;position:relative;color:#0a146e;text-align:center;padding-top:3px;white-space:nowrap}
.shape>svg{width:62px;height:62px;margin-left:2px;border:1px solid #8faccb;border-right:1px solid #253a74;border-bottom:1px solid #253a74;box-shadow:1px 1px 1px #aab;background:linear-gradient(135deg,#fcfdff,#d3e6fa)}
.shape>span{display:block;margin-top:5px;line-height:16px}
.picked{background:linear-gradient(#ffe9a3,#ffdf8c 60%,#ffd55a);box-shadow:inset 0 0 0 1px #ffd047}
.picked>.dd{position:absolute;right:2px;top:31px}
.picked>svg{margin-top:-1px;margin-bottom:1px}
.ln{fill:#f2f2f3;stroke:#555;filter:drop-shadow(1px 1px 1px #b5bac4)}
.yes{font:13.500px "Open Sans",sans-serif;text-anchor:middle;fill:#111}
.chev{fill:none;stroke:#555;stroke-width:2}
.vbar{width:16px;background:#f0f0f0;display:flex;flex-direction:column;align-items:center;flex:none}
.vbar svg{width:10px;height:8px}
.vbar b{width:15px;background:#cdcdcd}
.vb-side{padding:4px 0 4px}
.vb-side b{height:74px;margin:75px 0 auto}
.stabs{height:24px;display:flex;align-items:flex-start;padding-left:3px}
.stab{height:21px;display:flex;align-items:center;gap:1px;padding-right:12px;white-space:nowrap;color:#333}
.stab.on{background:#fff;border:1px solid #a9adb4;border-top:0;border-radius:0 0 3px 3px;padding:0 4px 0 3px;margin-right:6px}

.editor{width:1085px;margin-left:4px;border:1px solid #9fa5ae;display:flex;flex-direction:column;background:#d5e0f3}
.dtabs{height:23px;display:flex;background:linear-gradient(#e6e9ee,#fff 80%);border-bottom:1px solid #a5abb4;align-items:flex-end;flex:none}
.dtab{width:105px;height:22px;display:flex;align-items:center;padding-left:23px;position:relative;z-index:0;background:#a5abb4;clip-path:polygon(0 100%,22px 0,103px 0,105px 2px,105px 100%);color:#111;font-weight:bold;margin-bottom:-1px}
.dtab::before{content:"";position:absolute;z-index:-1;inset:1px 1px 0 1px;background:linear-gradient(#f4fafe,#c5d6f3);clip-path:polygon(0 100%,22px 0,100% 0,100% 100%)}
.dtab span{margin:0 9px 0 9px}
.dx{width:9px;height:9px}
.dlist{margin:0 6px 8px auto;border:5px solid transparent;border-top-color:#666;border-bottom:0}
.doc{margin:2px 3px 3px;border:1px solid #5f86ba;height:515px;display:flex;flex-direction:column;background:#e3e7ea}
.hr{height:18px;display:flex;border-bottom:1px solid #5f86ba}
.corner{width:18px;border-right:1px solid #5f86ba;background:radial-gradient(#fff,#dfe6f0 70%);flex:none}
.hruler{flex:1;overflow:hidden;display:flex;padding-left:4px;background:linear-gradient(90deg,#000 1px,transparent 1px) 0 100%/4px 5px repeat-x,linear-gradient(90deg,#000 1px,transparent 1px) 24px 100%/40px 8px repeat-x,#e6eaed}
.hruler span{flex:none;width:40px;border-left:1px solid #000;font:11px/10px "Liberation Serif",serif;color:#000;padding-left:1px}
.mid{height:473px;display:flex}
.vruler{width:18px;flex:none;overflow:hidden;border-right:1px solid #5f86ba;background:linear-gradient(#000 1px,transparent 1px) 100% 1px/5px 4px repeat-y,linear-gradient(#000 1px,transparent 1px) 100% 9px/8px 40px repeat-y,#e6eaed}
.vruler span{display:block;width:17px;height:40px;border-top:1px solid #000;writing-mode:vertical-rl;transform:rotate(180deg);font:11px/9px "Liberation Serif",serif;color:#000;padding-top:1px}
.vruler span:first-child{height:30px}
.sheet{flex:1;display:flex;flex-direction:column}
.view-row{height:456px;display:flex}
.canvas{position:relative;flex:1;background:#fff;font:13px/17px "Noto Sans CJK SC",sans-serif}
.wires{position:absolute;left:0;top:0;width:1041px;height:456px}
.node{position:absolute;top:147px;width:101px;height:61px;padding:0 3px 3px 0;background:#3498db;color:#fff;display:flex;align-items:center;justify-content:center;text-align:center}
.n1{left:316px}.n2{left:532px}
.lbl{position:absolute;color:#2472a8;text-align:center;white-space:nowrap}
.l1{left:231px;top:159px}.l2{left:445px;top:159px}.l3{left:147px;top:213px;color:#000}
.vb-doc{padding:5px 0 4px}
.vb-doc b{height:104px;margin:148px 0 auto}
.pages{height:17px;display:flex;border-top:1px solid #666;background:#dde2ea}
.pnav{width:67px;display:flex;gap:2px;border-right:1px solid #777;align-items:center}
.pnav svg{width:14px;height:14px;padding:3px;background:#e9edf1}
.ptab{width:50px;background:#fff;color:#222;padding-left:8px;line-height:16px;letter-spacing:.5px;clip-path:polygon(0 0,100% 0,34px 100%,0 100%)}
.pfill{width:420px}
.split{width:5px;border:1px solid #999fa8;background:#fff}
.hbar{width:497px;background:#f0f0f0;display:flex;align-items:center;padding:0 5px 0 4px}
.hbar svg{width:8px;height:10px}
.hbar b{height:15px;width:219px;background:#cdcdcd;margin:0 auto 0 126px}
.palette{height:22px;border-top:1px solid #5f86ba;display:flex;gap:1px;padding:3px 0 0 2px}
.palette i{width:15px;height:15px}

.dock{width:22px;padding:4px 0 0 2px;display:flex;flex-direction:column;gap:14px}
.dk{height:72px;border:1px solid #a5a99f;border-right:0;background:linear-gradient(90deg,#fbf1cc,#f4d984);display:flex;flex-direction:column;align-items:flex-start;padding:1px 0 0 1px;color:#666}
.dk.d1{height:96px}
.dk span{writing-mode:vertical-rl;text-orientation:sideways;line-height:15px;margin-top:6px}
.q{font:bold 15px "Liberation Sans",sans-serif;fill:#1e94e0}

.status{height:23px;display:flex;align-items:center;background:linear-gradient(#f2f4f6,#d9dce0 30%,#bfc3c8);border-top:1px solid #969ba3;color:#444;padding-left:3px}
.status span{white-space:nowrap}
.site{color:#1a6ed0;text-decoration:underline;width:125px;letter-spacing:.1px}
.pg{border-left:1px solid #999;padding-left:10px;width:64px;line-height:18px}
.xy{letter-spacing:.55px}
.view{margin-left:auto;width:347px;height:22px;border-left:1px solid #999;display:grid;grid-template-columns:24px 21px 30px 44px 22px 93px 21px 21px 22px 19px 21px;padding-left:6px;align-items:center;flex:none}
.vbtn{width:21px;height:18px;border:1px solid #bf953c;border-radius:3px;background:linear-gradient(#ffe9a4,#ffd45c);display:flex;align-items:center;justify-content:center}
.knob{width:15px;height:15px;border:1px solid #888;border-radius:50%;background:linear-gradient(#fff,#dfe2e6);font:bold 14px/13px "Liberation Sans",sans-serif;text-align:center;color:#444}
.slider{width:86px;height:16px}

.taskbar{height:40px;background:#090b0c;display:flex}
.tb{width:40px;margin:0 5px 0 4px;border-bottom:2px solid #76b9ed;display:flex;align-items:center;justify-content:center;padding-top:1px;flex:none}
.tb svg{width:24px;height:24px}
.tb.sys{width:48px;margin:0;border-bottom-color:transparent}
.tb.sys+.tb:not(.sys){margin-left:6px}
.tb.active{width:48px;margin:0 1px 0 0;background:#4f4f4f}
.multi{border-image:linear-gradient(90deg,#76b9ed 32px,#4e7ea6 32px) 2}
.ty{font:17px "Liberation Serif",serif;text-anchor:middle;fill:#333}
.pp{font:bold 17px "Liberation Sans",sans-serif;fill:#dc501d}
.ij{font:bold 8px "Liberation Mono",monospace;fill:#fff}
.ff{font:bold 8px "Liberation Sans",sans-serif;fill:#fff;text-anchor:middle}
.tray{margin-left:auto;display:flex;align-items:center;gap:7px;margin-right:4px;color:#fff;border-right:1px solid #555}
.tray svg{width:14px;height:14px}.tray .vol{width:18px}
.tray span{font-size:13px;width:18px}
```
FILE: script.js
```js
const ruler = (id, values) => {
  document.getElementById(id).innerHTML = values.map(v => `<span>${v}</span>`).join('');
};
const range = (from, to) => Array.from({length: (to - from) / 10 + 1}, (_, k) => from + k * 10);
ruler('hruler', range(20, 280));
ruler('vruler', range(40, 150));

const colors = ('b20514 d8051d c94d78 e85462 ef6c70 e95b9d e097b7 ed8c8a f0909e ffa07a f0ac96 f5bcbc e8d4e8 fdd2e4 fde0e6 ' +
  '12224f 23366f 412b78 0a4990 0068a8 4060ac 5584c4 0080cc 008ece 30a8e0 00b4f0 30c8fa 8ac0ea a0d8ee ceeaf4 ' +
  '004035 005830 006460 586a30 007a48 1e9640 00ae9e 52bfc0 1bcbb2 48bb80 00b054 80b812 a4d066 c0d844 cfe8cc ' +
  'e35020 ec6a00 f08400 f49a58 f0a400 ffb000 fcb838 fac830 ffd800 ffee00 fcf484 fdd470 e8ca98 fddcb0 fbe6d0 ' +
  '7a3070 843e84 684098 74529a 9a68a0 9c588a').split(' ');
document.getElementById('palette').innerHTML = colors.map(c => `<i style="background:#${c}"></i>`).join('');
```
